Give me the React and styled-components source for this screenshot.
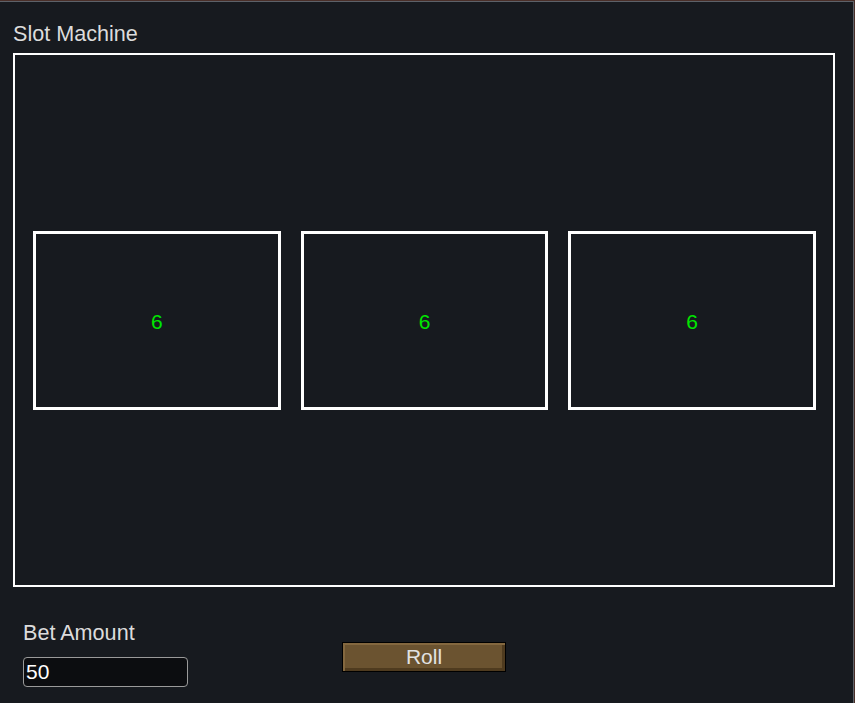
import React, { useState } from 'react';
import styled, { createGlobalStyle } from 'styled-components'

const GlobalStyle = createGlobalStyle`
  html, body {
    margin: 0;
    padding: 0;
    background: #4a2f29;
    height: 100%;
    overflow: hidden;
  }
  #root {
    height: 100%;
  }
`

const Reel = ({ value }) => {
  return (
    <ReelBox>
      <ReelValue>{value}</ReelValue>
    </ReelBox>
  )
}

const App = () => {
  const [reels, setReels] = useState([6, 6, 6])
  const [bet, setBet] = useState('50')

  const roll = () => {
    setReels(reels.map(() => Math.floor(Math.random() * 9) + 1))
  }

  return (
    <>
      <GlobalStyle />
      <Panel>
        <Title>Slot Machine</Title>
        <Machine>
          <ReelRow>
            {reels.map((r, i) => <Reel key={i} value={r} />)}
          </ReelRow>
        </Machine>
        <Controls>
          <BetGroup>
            <Label htmlFor='bet'>Bet Amount</Label>
            <BetInput id='bet' value={bet} onChange={e => setBet(e.target.value)} autoFocus />
          </BetGroup>
          <RollButton onClick={roll}>Roll</RollButton>
          <div />
        </Controls>
      </Panel>
    </>
  )
}

export default App

const Panel = styled.div`
  box-sizing: border-box;
  height: calc(100% - 1px);
  margin: 1px 1px 0 0;
  border-top: 1px solid #5d6168;
  border-right: 1px solid #5d6168;
  background-color: #171a1f;
  padding: 19px 18px 0 13px;
  font-family: "Liberation Sans", Arial, sans-serif;
  color: #dcdcdc;
`

const Title = styled.div`
  font-size: 21.6px;
  line-height: 26px;
  margin-bottom: 6px;
`

const Machine = styled.div`
  box-sizing: border-box;
  height: 534px;
  border: 2px solid #fff;
  display: flex;
  align-items: center;
  padding: 0 17px 0 18px;
`

const ReelRow = styled.div`
  flex: 1;
  display: grid;
  grid-template-columns: repeat(3, 1fr);
  gap: 20px;
`

const ReelBox = styled.div`
  box-sizing: border-box;
  height: 179px;
  border: 3px solid #fff;
  display: flex;
  align-items: center;
  justify-content: center;
  padding-top: 3px;
`

const ReelValue = styled.span`
  color: #00e600;
  font-size: 21px;
`

const Controls = styled.div`
  display: grid;
  grid-template-columns: 1fr auto 1fr;
  align-items: start;
  padding: 34px 0 0 10px;
`

const BetGroup = styled.div`
  display: flex;
  flex-direction: column;
  align-items: flex-start;
  gap: 12px;
`

const Label = styled.label`
  font-size: 21.6px;
  line-height: 24px;
`

const BetInput = styled.input`
  box-sizing: border-box;
  width: 165px;
  height: 30px;
  background: #0c0d10;
  border: 1px solid #9a9a9a;
  border-radius: 4px;
  color: #fff;
  font-family: "Liberation Sans", Arial, sans-serif;
  font-size: 21px;
  padding: 0 2px;
  caret-color: #fff;
  outline: none;
`

const RollButton = styled.button`
  box-sizing: border-box;
  width: 164px;
  height: 30px;
  margin-top: 21px;
  margin-right: 10px;
  background: #6b5330;
  border: 1px solid #000;
  box-shadow: inset 2px 2px 0 #84683f, inset -3px -3px 0 #4f3b1f;
  color: #e2e2e2;
  font-family: "Liberation Sans", Arial, sans-serif;
  font-size: 21px;
  line-height: 26px;
  padding: 0;
  cursor: pointer;
`
